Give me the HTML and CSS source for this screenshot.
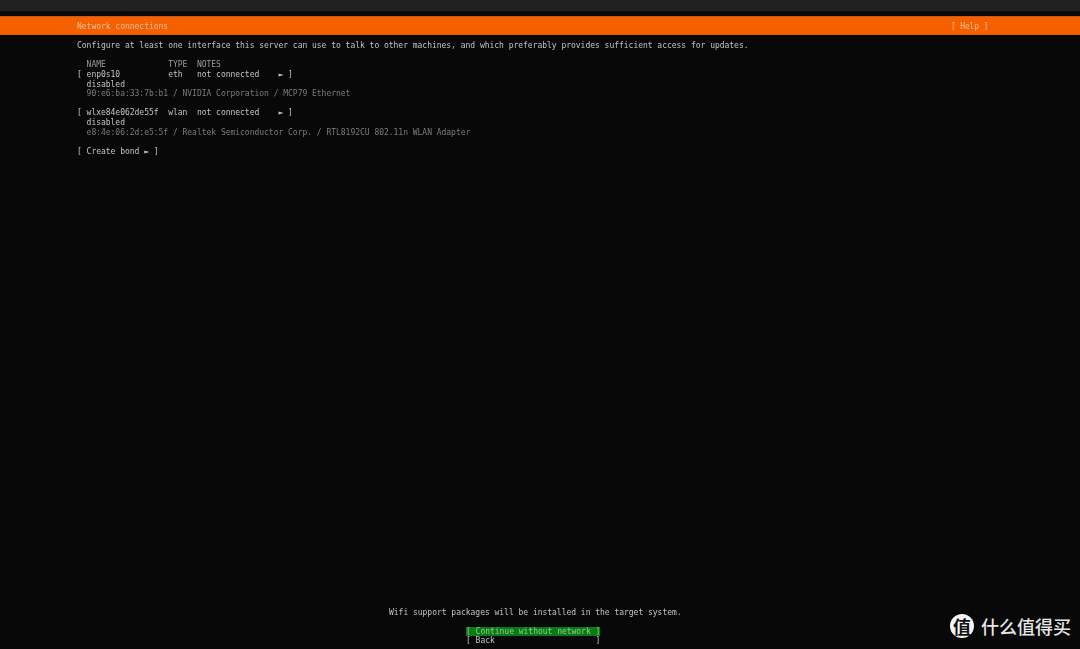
FILE: index.html
```html
<!DOCTYPE html>
<html lang="en">
<head>
<meta charset="utf-8">
<title>Network connections</title>
<link rel="stylesheet" href="styles.css">
</head>
<body>
<div class="topbar"></div>
<main class="screen">
  <header class="title">
    <span>Network connections</span>
    <span class="help">[ Help ]</span>
  </header>
  <section class="content">
    <p class="line intro">Configure at least one interface this server can use to talk to other machines, and which preferably provides sufficient access for updates.</p>
    <p class="line blank"></p>
    <p class="line dim-head">  NAME             TYPE  NOTES</p>
    <p class="line">[ enp0s10          eth   not connected    ► ]</p>
    <p class="line">  disabled</p>
    <p class="line dim">  90:e6:ba:33:7b:b1 / NVIDIA Corporation / MCP79 Ethernet</p>
    <p class="line blank"></p>
    <p class="line">[ wlxe84e062de55f  wlan  not connected    ► ]</p>
    <p class="line">  disabled</p>
    <p class="line dim">  e8:4e:06:2d:e5:5f / Realtek Semiconductor Corp. / RTL8192CU 802.11n WLAN Adapter</p>
    <p class="line blank"></p>
    <p class="line">[ Create bond ► ]</p>
  </section>
  <footer class="foot">
    <p class="line">Wifi support packages will be installed in the target system.</p>
    <p class="line blank"></p>
    <div class="buttons">
      <p class="line active">[ Continue without network ]</p>
      <p class="line">[ Back                     ]</p>
    </div>
  </footer>
</main>
<div class="mark">
  <span class="mark-logo">值</span>
  <span class="mark-name">什么值得买</span>
</div>
</body>
</html>
```

FILE: styles.css
```css
* { box-sizing: border-box; }
html, body { margin: 0; height: 649px; overflow: hidden; background: #080808; }
body {
  display: flex;
  flex-direction: column;
  font-family: "DejaVu Sans Mono", "Liberation Mono", monospace;
  font-size: 8px;
  letter-spacing: -0.02px;
  color: #c4c4c4;
}
.topbar { height: 11px; flex: none; background: #212121; }
.screen {
  flex: 1;
  display: flex;
  flex-direction: column;
  margin-top: 5px;
  filter: blur(0.45px);
  min-height: 0;
}
.title {
  height: 19px;
  flex: none;
  display: flex;
  align-items: center;
  justify-content: space-between;
  padding: 3px 92px 0 77px;
  background: #f56100;
  color: #e8bd9f;
  border-top: 1px solid #c85a16;
  border-bottom: 1px solid #d95f10;
  line-height: 9.63px;
  white-space: pre;
}
.help { letter-spacing: -0.2px; }
.content { padding: 6px 0 0 77px; }
.line {
  margin: 0;
  height: 9.63px;
  line-height: 9.63px;
  white-space: pre;
}
.dim { color: #7c7c7c; }
.dim-head { color: #9c9c9c; }
.foot {
  margin-top: auto;
  padding: 0 0 3px 389px;
}
.buttons { margin-left: 77px; width: 134px; }
.active { background: #0a7a14; color: #94c79a; }
.mark {
  position: absolute;
  left: 950px;
  top: 614px;
  display: flex;
  align-items: center;
  gap: 7px;
  height: 24px;
}
.mark-logo {
  width: 24px;
  height: 24px;
  border-radius: 50%;
  background: #f4f4f4;
  color: #111;
  font: 700 18px/24px "Noto Sans CJK SC", sans-serif;
  text-align: center;
}
.mark-name {
  color: #e6e6e6;
  font: 500 18px/24px "Noto Sans CJK SC", sans-serif;
}
```
